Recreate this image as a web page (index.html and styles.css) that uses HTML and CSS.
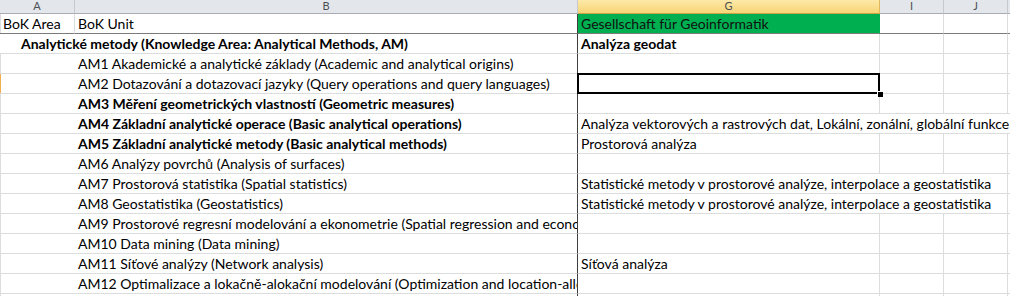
FILE: index.html
```html
<!DOCTYPE html>
<html lang="cs">
<head>
    <meta charset="UTF-8">
    <meta name="viewport" content="width=device-width, initial-scale=1.0">
    <title>BoK - Analytické metody</title>
    <link rel="stylesheet" href="styles.css">
</head>
<body>
    <div class="sheet">
        <!-- column letters -->
        <div class="colhead">A</div>
        <div class="colhead">B</div>
        <div class="colhead selected">G</div>
        <div class="colhead">I</div>
        <div class="colhead">J</div>
        <div class="colhead last"></div>

        <div class="cell first">BoK Area</div>
        <div class="cell frozen">BoK Unit</div>
        <div class="cell org">Gesellschaft für Geoinformatik</div>
        <div class="cell"></div>
        <div class="cell"></div>
        <div class="cell"></div>

        <div class="cell frozen area span2">Analytické metody (Knowledge Area: Analytical Methods, AM)</div>
        <div class="cell bold">Analýza geodat</div>
        <div class="cell"></div>
        <div class="cell"></div>
        <div class="cell"></div>

        <div class="cell frozen unit span2">AM1 Akademické a analytické základy (Academic and analytical origins)</div>
        <div class="cell"></div>
        <div class="cell"></div>
        <div class="cell"></div>
        <div class="cell"></div>

        <div class="cell frozen unit span2 marked">AM2 Dotazování a dotazovací jazyky (Query operations and query languages)</div>
        <div class="cell active"></div>
        <div class="cell"></div>
        <div class="cell"></div>
        <div class="cell"></div>

        <div class="cell frozen unit span2 bold">AM3 Měření geometrických vlastností (Geometric measures)</div>
        <div class="cell"></div>
        <div class="cell"></div>
        <div class="cell"></div>
        <div class="cell"></div>

        <div class="cell frozen unit span2 bold">AM4 Základní analytické operace (Basic analytical operations)</div>
        <div class="cell span4">Analýza vektorových a rastrových dat, Lokální, zonální, globální funkce</div>

        <div class="cell frozen unit span2 bold">AM5 Základní analytické metody (Basic analytical methods)</div>
        <div class="cell">Prostorová analýza</div>
        <div class="cell"></div>
        <div class="cell"></div>
        <div class="cell"></div>

        <div class="cell frozen unit span2">AM6 Analýzy povrchů (Analysis of surfaces)</div>
        <div class="cell"></div>
        <div class="cell"></div>
        <div class="cell"></div>
        <div class="cell"></div>

        <div class="cell frozen unit span2">AM7 Prostorová statistika (Spatial statistics)</div>
        <div class="cell span3">Statistické metody v prostorové analýze, interpolace a geostatistika</div>
        <div class="cell"></div>

        <div class="cell frozen unit span2">AM8 Geostatistika (Geostatistics)</div>
        <div class="cell span3">Statistické metody v prostorové analýze, interpolace a geostatistika</div>
        <div class="cell"></div>

        <div class="cell frozen unit span2">AM9 Prostorové regresní modelování a ekonometrie (Spatial regression and econometrics)</div>
        <div class="cell"></div>
        <div class="cell"></div>
        <div class="cell"></div>
        <div class="cell"></div>

        <div class="cell frozen unit span2">AM10 Data mining (Data mining)</div>
        <div class="cell"></div>
        <div class="cell"></div>
        <div class="cell"></div>
        <div class="cell"></div>

        <div class="cell frozen unit span2">AM11 Síťové analýzy (Network analysis)</div>
        <div class="cell">Síťová analýza</div>
        <div class="cell"></div>
        <div class="cell"></div>
        <div class="cell"></div>

        <div class="cell frozen unit span2">AM12 Optimalizace a lokačně-alokační modelování (Optimization and location-allocation modelling)</div>
        <div class="cell"></div>
        <div class="cell"></div>
        <div class="cell"></div>
        <div class="cell"></div>

        <div class="cell frozen unit span2"></div>
        <div class="cell"></div>
        <div class="cell"></div>
        <div class="cell"></div>
        <div class="cell"></div>
    </div>
</body>
</html>
```

FILE: styles.css
```css
/* spreadsheet view */
body {
    margin: 0;
    padding: 0;
    background: #fff;
    font-family: Lato, "Open Sans", sans-serif;
    color: #000;
    overflow: hidden;
}

.sheet {
    display: grid;
    grid-template-columns: 75px 503px 302px 64px 64px 40px;
    grid-template-rows: 14px;
    grid-auto-rows: 20px;
    width: 1010px;
    height: 296px;
    overflow: hidden;
}

.colhead {
    box-sizing: border-box;
    height: 14px;
    background: #e3e6ea;
    border-right: 1px solid #c6cacf;
    border-bottom: 1px solid #a9adb3;
    color: #4a4f55;
    font-size: 11px;
    line-height: 12px;
    text-align: center;
}

.colhead.selected {
    background: linear-gradient(#fde9a8, #f8d577);
    border-right-color: #e2b95a;
    border-bottom-color: #c9a24a;
}

.cell {
    box-sizing: border-box;
    border-right: 1px solid #dadcdd;
    border-bottom: 1px solid #dadcdd;
    padding-left: 3px;
    font-size: 14px;
    line-height: 19px;
    white-space: nowrap;
    overflow: hidden;
}

.cell.first {
    box-shadow: inset 1px 0 #dadcdd;
}

.cell.frozen {
    border-right: 1px solid #3f3f3f;
}

/* header row 1 ends with the freeze line */
.sheet > .cell:nth-child(n+7):nth-child(-n+12) {
    border-bottom: 1px solid #7b7b7b;
}

.cell.org {
    background: #00b050;
    border-right-color: #00b050;
    color: #111;
}

.bold {
    font-weight: bold;
}

.span2 {
    grid-column: span 2;
}

.span3 {
    grid-column: span 3;
}

.span4 {
    grid-column: span 4;
}

.area {
    padding-left: 21px;
    font-weight: bold;
}

.unit {
    padding-left: 78px;
    box-shadow: inset 1px 0 #dadcdd;
}

.unit.marked {
    box-shadow: inset 1px 0 #f0b050;
}

/* active cell frame with the fill handle */
.cell.active {
    position: relative;
    overflow: visible;
}

.cell.active::before {
    content: "";
    position: absolute;
    top: -1px;
    left: -1px;
    right: -1px;
    bottom: -1px;
    border: 2px solid #000;
}

.cell.active::after {
    content: "";
    position: absolute;
    right: -4px;
    bottom: -4px;
    width: 5px;
    height: 5px;
    background: #000;
    border: 1px solid #fff;
    border-right: none;
    border-bottom: none;
}
```
